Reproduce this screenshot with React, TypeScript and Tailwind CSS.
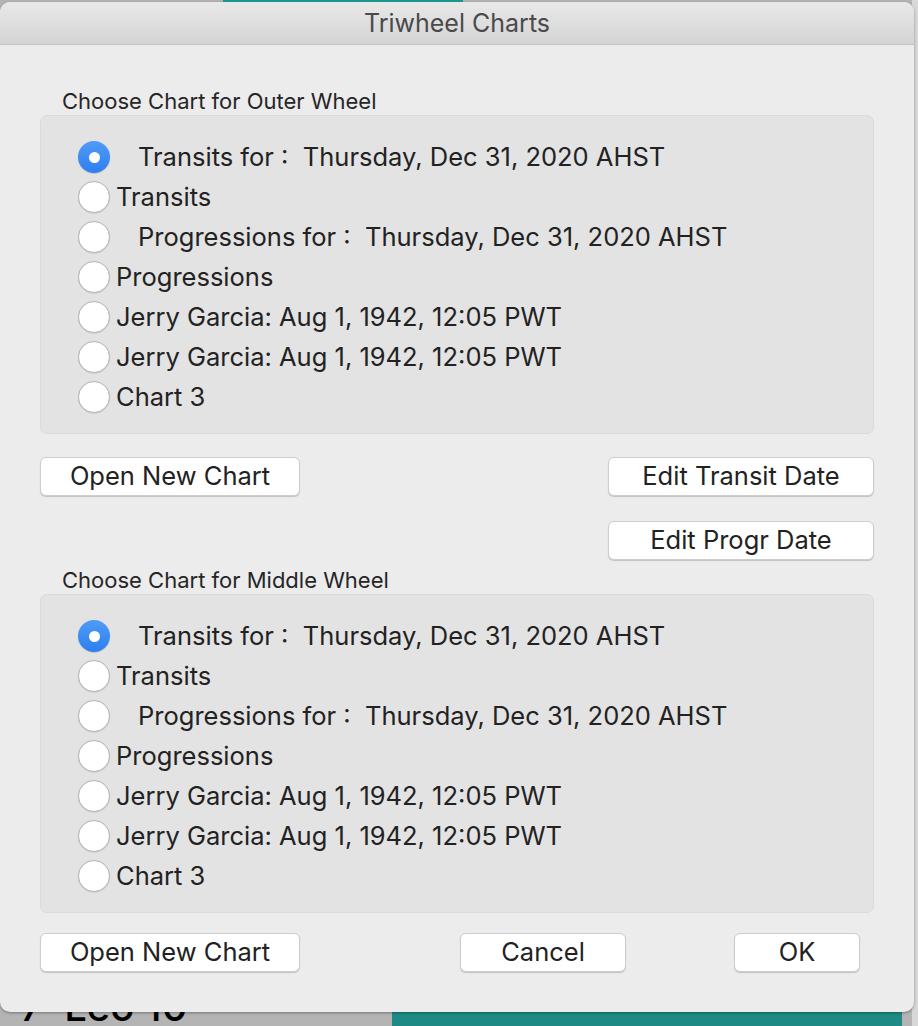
import React from "react";

// Triwheel chart picker dialog, drawn over a slice of the chart window behind it.
const choices = [
  { label: "Transits for :  Thursday, Dec 31, 2020 AHST", indent: true },
  { label: "Transits", indent: false },
  { label: "Progressions for :  Thursday, Dec 31, 2020 AHST", indent: true },
  { label: "Progressions", indent: false },
  { label: "Jerry Garcia: Aug 1, 1942, 12:05 PWT", indent: false },
  { label: "Jerry Garcia: Aug 1, 1942, 12:05 PWT", indent: false },
  { label: "Chart 3", indent: false },
];

function Radio({ checked }: { checked: boolean }) {
  if (checked) {
    return (
      <span className="flex h-[32px] w-[32px] shrink-0 items-center justify-center rounded-full bg-gradient-to-b from-[#4f9bf8] to-[#2d7ff0] shadow-[0_0.5px_1px_rgba(0,0,0,0.25)]">
        <span className="h-[11px] w-[11px] rounded-full bg-white" />
      </span>
    );
  }
  return (
    <span className="h-[32px] w-[32px] shrink-0 rounded-full border border-[#b5b5b5] bg-white shadow-[0_0.5px_1px_rgba(0,0,0,0.15)]" />
  );
}

function ChartGroup({ title }: { title: string }) {
  return (
    <div>
      <div className="pl-[22px] text-[22px] leading-[24px] text-[#262626]">{title}</div>
      <div className="mt-[2px] rounded-[7px] border border-[#dadada] bg-[#e3e3e3] pb-[16px] pl-[37px] pt-[21px]">
        {choices.map((c, i) => (
          <div key={i} className="flex h-[40px] items-center">
            <Radio checked={i === 0} />
            <span
              className={`${c.indent ? "pl-[28px]" : "pl-[6px]"} whitespace-pre text-[25.5px] text-[#222222]`}
            >
              {c.label}
            </span>
          </div>
        ))}
      </div>
    </div>
  );
}

function Button({ children, className }: { children: React.ReactNode; className: string }) {
  return (
    <button
      className={`flex h-[39px] items-center justify-center rounded-[6px] border border-[#cdcdcd] bg-white text-[25.5px] text-[#222222] shadow-[0_1px_1px_rgba(0,0,0,0.18)] ${className}`}
    >
      {children}
    </button>
  );
}

export default function App() {
  return (
    <div
      className="relative h-[1026px] w-[918px] overflow-hidden bg-[#b4b4b4]"
      style={{ fontFamily: "Inter, 'Noto Sans', sans-serif" }}
    >
      {/* chart window peeking out behind the dialog */}
      <div className="absolute left-[223px] top-0 h-[3px] w-[240px] bg-[#1d9a93]" />
      <div className="absolute left-[392px] top-[1010px] h-[16px] w-[510px] bg-[#1f8a85]" />
      <div className="absolute right-0 top-0 h-[1026px] w-[6px] bg-[#d8d8d8]" />
      <div className="absolute left-[20px] top-[987px] whitespace-pre text-[40px] font-medium leading-[40px] text-black">
        7  Leo 10
      </div>

      <div className="absolute left-0 top-[2px] flex h-[1010px] w-[914px] flex-col overflow-hidden rounded-[10px] bg-[#ececec] shadow-[0_1px_3px_rgba(0,0,0,0.35)]">
        <div className="flex h-[43px] shrink-0 items-center justify-center border-b border-[#c4c4c4] bg-gradient-to-b from-[#e9e9e9] to-[#d4d4d4] pt-[2px] text-[25px] text-[#4a4a4a]">
          Triwheel Charts
        </div>

        <div className="flex flex-col px-[40px] pt-[44px]">
          <ChartGroup title="Choose Chart for Outer Wheel" />

          <div className="mt-[23px] flex items-start justify-between">
            <Button className="w-[260px]">Open New Chart</Button>
            <div className="flex flex-col gap-[25px]">
              <Button className="w-[266px]">Edit Transit Date</Button>
              <Button className="w-[266px]">Edit Progr Date</Button>
            </div>
          </div>

          <div className="mt-[8px]">
            <ChartGroup title="Choose Chart for Middle Wheel" />
          </div>

          <div className="mt-[20px] flex items-center pr-[14px]">
            <Button className="w-[260px]">Open New Chart</Button>
            <Button className="ml-[160px] w-[166px]">Cancel</Button>
            <Button className="ml-auto w-[126px]">OK</Button>
          </div>
        </div>
      </div>
    </div>
  );
}
